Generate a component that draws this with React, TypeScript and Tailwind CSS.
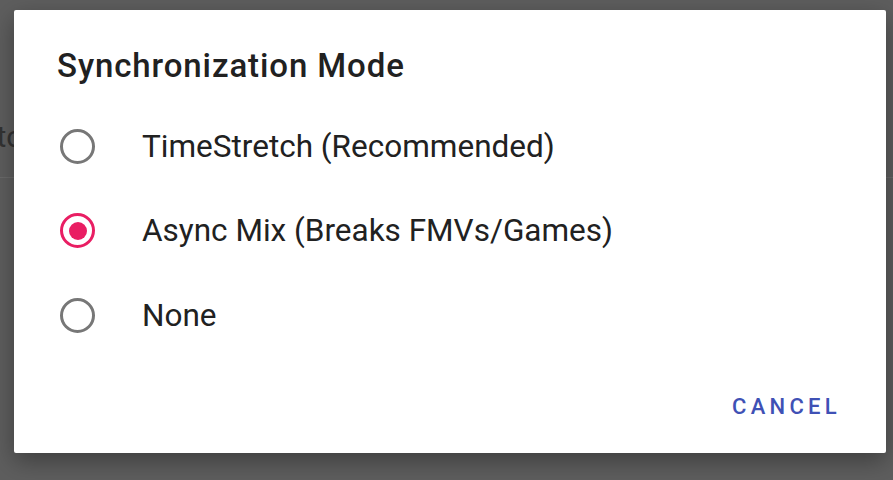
import { useState } from "react";

const OPTIONS = ["TimeStretch (Recommended)", "Async Mix (Breaks FMVs/Games)", "None"];

function Radio({ checked }: { checked: boolean }) {
  return (
    <span
      className={
        "flex h-[35px] w-[35px] shrink-0 items-center justify-center rounded-full border-[3px] " +
        (checked ? "border-[#e91e63]" : "border-[#777777]")
      }
    >
      {checked && <span className="h-[18px] w-[18px] rounded-full bg-[#e91e63]" />}
    </span>
  );
}

export default function App() {
  const [selected, setSelected] = useState(1);

  return (
    <div
      className="relative h-[480px] w-[893px] overflow-hidden bg-[#5e5e5e]"
      style={{ fontFamily: "Roboto, 'Liberation Sans', sans-serif" }}
    >
      {/* page behind the scrim */}
      <div className="pt-[96px]">
        <div className="flex h-[82px] items-center border-b border-[#6a6a6a]">
          <span className="-ml-[57px] text-[30px] text-[#333333]">Stretch</span>
        </div>
      </div>

      <div className="absolute left-[14px] top-[10px] flex h-[443px] w-[872px] flex-col rounded-[2px] bg-white shadow-[0_8px_24px_rgba(0,0,0,0.35)]">
        <h2 className="pl-[43px] pt-[34px] text-[33px] font-medium leading-[44px] tracking-[0.9px] text-[#212121]">
          Synchronization Mode
        </h2>

        <div className="mt-[16px] flex flex-col">
          {OPTIONS.map((label, i) => (
            <button
              key={label}
              type="button"
              onClick={() => setSelected(i)}
              className="flex h-[84.5px] items-center pl-[46px] text-left"
            >
              <Radio checked={selected === i} />
              <span className="ml-[47px] text-[31.5px] text-[#212121]">{label}</span>
            </button>
          ))}
        </div>

        <div className="mt-auto flex justify-end pb-[30px] pr-[45px]">
          <button
            type="button"
            className="text-[22px] font-medium tracking-[4.3px] text-[#3f51b5]"
          >
            CANCEL
          </button>
        </div>
      </div>
    </div>
  );
}
